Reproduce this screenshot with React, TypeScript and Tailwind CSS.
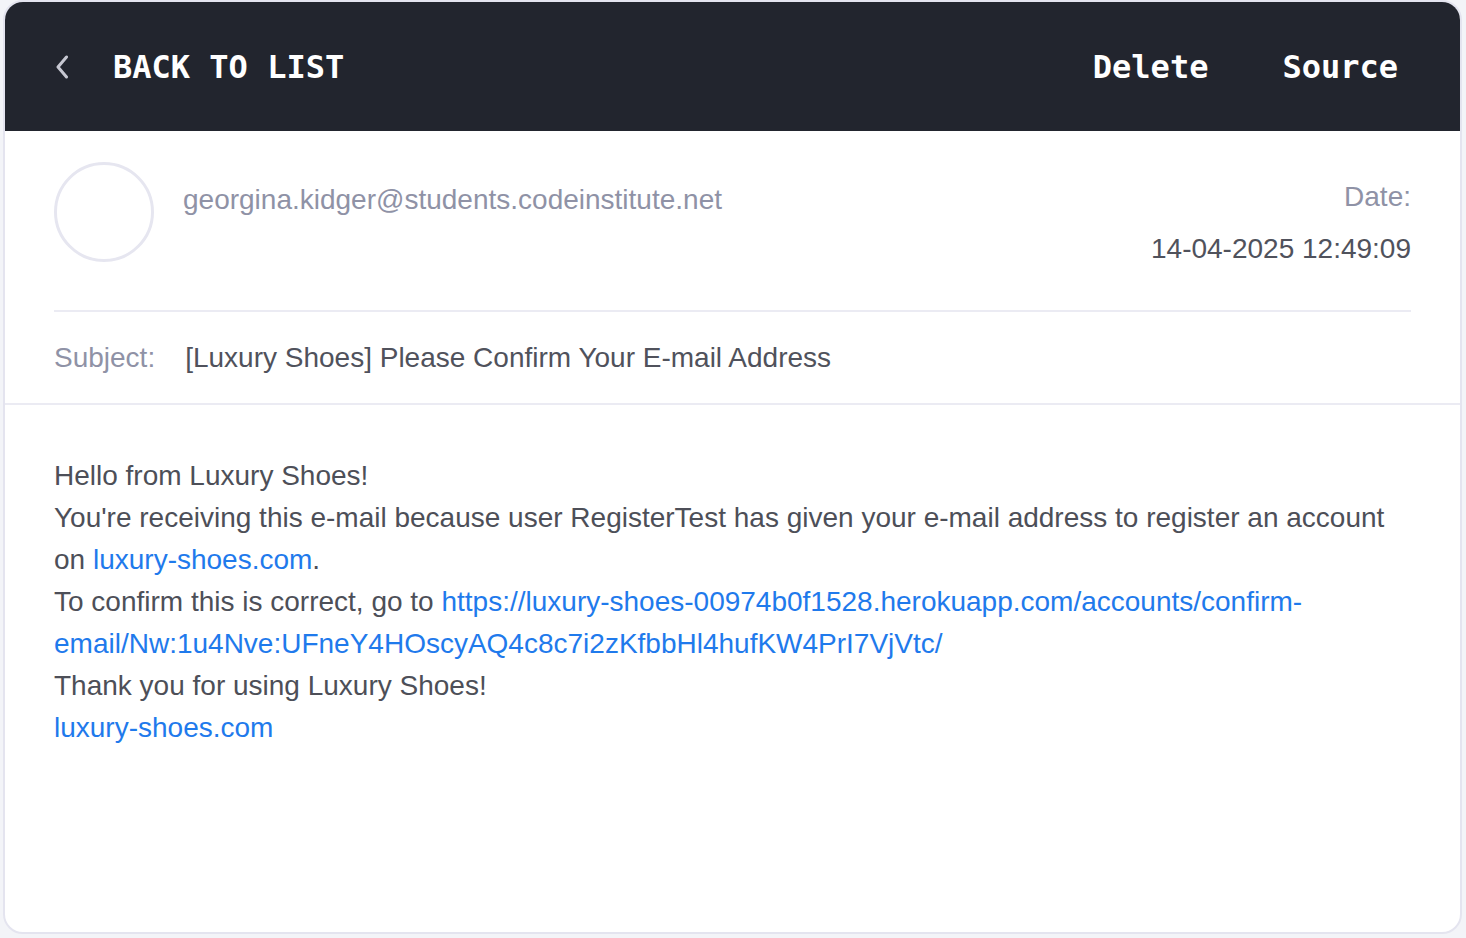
import React from 'react';

const ChevronLeft = () => (
  <svg width="14" height="24" viewBox="0 0 14 24" fill="none" className="shrink-0">
    <path d="M11.5 2 L3 12 L11.5 22" stroke="#c6c7d1" strokeWidth="3" strokeLinecap="round" strokeLinejoin="round" />
  </svg>
);

const App = () => {
  const sans = { fontFamily: '"Liberation Sans", Arial, Helvetica, sans-serif' };
  const mono = { fontFamily: '"DejaVu Sans Mono", Menlo, monospace' };

  return (
    <div className="min-h-screen bg-[#f3f4f8] pl-[3px] pr-[4px] pb-[4px]">
      <div className="h-[934px] rounded-[20px] border-2 border-[#e4e4ef] bg-white overflow-hidden" style={sans}>
        <div className="h-[129px] bg-[#22252e] flex items-center justify-between pl-[50px] pr-[62px]" style={mono}>
          <div className="flex items-center gap-[44px]">
            <ChevronLeft />
            <span className="text-[32px] font-bold text-white">BACK TO LIST</span>
          </div>
          <div className="flex items-center gap-[74px] text-[32px] font-bold text-white">
            <span>Delete</span>
            <span>Source</span>
          </div>
        </div>

        <div className="px-[49px] pt-[31px]">
          <div className="flex justify-between">
            <div className="flex items-start gap-[29px]">
              <div className="w-[100px] h-[100px] rounded-full border-[3px] border-[#e6e6f0]" />
              <div className="mt-[17px] text-[28px] leading-[42px] text-[#8f92a6]">
                georgina.kidger@students.codeinstitute.net
              </div>
            </div>
            <div className="mt-[14px] text-right text-[28px] leading-[42px]">
              <div className="text-[#8f92a6]">Date:</div>
              <div className="mt-[10px] text-[#50525c]">14-04-2025 12:49:09</div>
            </div>
          </div>
          <div className="mt-[40px] h-[2px] bg-[#ebebf3]" />
          <div className="flex gap-[30px] pt-[25px] pb-[24px] text-[28px] leading-[42px]">
            <span className="text-[#8f92a6]">Subject:</span>
            <span className="text-[#50525c]">[Luxury Shoes] Please Confirm Your E-mail Address</span>
          </div>
        </div>
        <div className="h-[2px] bg-[#ebebf3]" />

        <div className="px-[49px] pt-[50px] text-[28px] leading-[42px] text-[#4d4f58]">
          <div>Hello from Luxury Shoes!</div>
          <div>
            You're receiving this e-mail because user RegisterTest has given your e-mail address to register an account on{' '}
            <a className="text-[#1f7aec]">luxury-shoes.com</a>.
          </div>
          <div>
            To confirm this is correct, go to{' '}
            <a className="text-[#1f7aec]">
              https://luxury-shoes-00974b0f1528.herokuapp.com/accounts/confirm-<wbr />email/Nw:1u4Nve:UFneY4HOscyAQ4c8c7i2zKfbbHl4hufKW4PrI7VjVtc/
            </a>
          </div>
          <div>Thank you for using Luxury Shoes!</div>
          <div>
            <a className="text-[#1f7aec]">luxury-shoes.com</a>
          </div>
        </div>
      </div>
    </div>
  );
};

export default App;
